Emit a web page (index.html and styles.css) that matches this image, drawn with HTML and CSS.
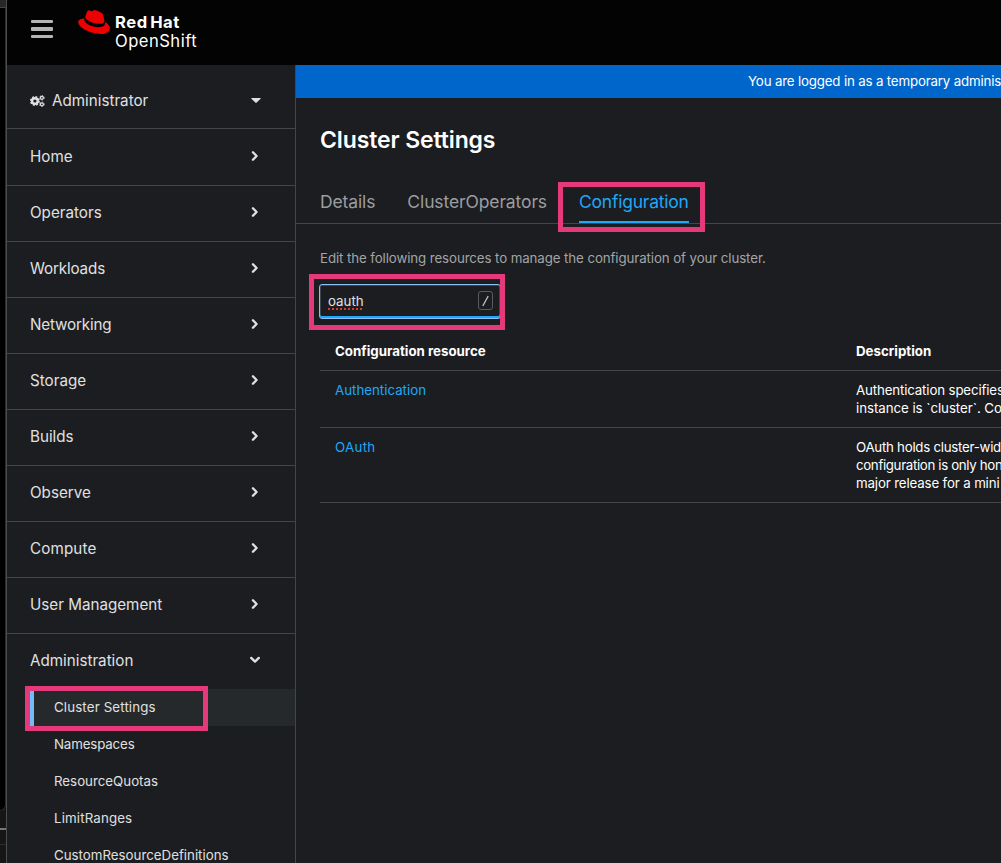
FILE: index.html
```html
<!DOCTYPE html>
<html lang="en">
<head>
<meta charset="utf-8">
<title>Cluster Settings · Red Hat OpenShift</title>
<link rel="stylesheet" href="styles.css">
</head>
<body>
<svg width="0" height="0" class="defs" aria-hidden="true">
  <symbol id="chev" viewBox="0 0 8 12"><path d="M1.9 2.2 5.6 6 1.9 9.8" fill="none" stroke="currentColor" stroke-width="2.3" stroke-linecap="round" stroke-linejoin="round"/></symbol>
</svg>
<div class="shell">
  <div class="edge"><div class="edge-top"></div><div class="edge-mid"></div><div class="edge-bar"></div><div class="edge-low"></div></div>
  <div class="app">
    <header class="masthead">
      <button class="burger" aria-label="Menu"><i></i><i></i><i></i></button>
      <a class="brand">
        <svg class="hat" viewBox="0 2.9 24 18.2"><path fill="#e00" d="M16.009 13.386c1.577 0 3.86-.326 3.86-2.202a1.765 1.765 0 0 0-.04-.431l-.94-4.08c-.216-.898-.406-1.305-1.982-2.093-1.223-.625-3.888-1.658-4.676-1.658-.733 0-.947.946-1.822.946-.842 0-1.467-.706-2.255-.706-.757 0-1.25.515-1.63 1.576 0 0-1.06 2.99-1.197 3.424a.81.81 0 0 0-.028.245c0 1.162 4.577 4.974 10.71 4.974m4.101-1.435c.218 1.032.218 1.14.218 1.277 0 1.765-1.984 2.745-4.593 2.745-5.895.004-11.06-3.451-11.06-5.734a2.326 2.326 0 0 1 .19-.925C2.746 9.415 0 9.794 0 12.217c0 3.969 9.405 8.861 16.851 8.861 5.71 0 7.149-2.582 7.149-4.62 0-1.605-1.387-3.425-3.887-4.512"/></svg>
        <span class="brand-text"><b>Red Hat</b><span>OpenShift</span></span>
      </a>
    </header>
    <div class="body">
      <nav class="sidebar">
        <div class="item perspective">
          <svg class="cogs" viewBox="0 0 15 12" fill="none" stroke="currentColor">
            <circle cx="4.9" cy="6" r="2.8" stroke-width="2.4"/>
            <circle cx="4.9" cy="6" r="4.2" stroke-width="1.5" stroke-dasharray="1.9 1.399"/>
            <circle cx="11.9" cy="2.8" r="1.5" stroke-width="1.3"/>
            <circle cx="11.9" cy="2.8" r="2.3" stroke-width=".8" stroke-dasharray="1.3 1.109"/>
            <circle cx="11.9" cy="9.3" r="1.5" stroke-width="1.3"/>
            <circle cx="11.9" cy="9.3" r="2.3" stroke-width=".8" stroke-dasharray="1.3 1.109"/>
          </svg>
          <span>Administrator</span>
          <svg class="caret" viewBox="0 0 10 5"><path d="M.6 0h8.8q.6.2.2.7L5.4 4.8q-.4.3-.8 0L.4.7Q0 .2.6 0z" fill="currentColor"/></svg>
        </div>
        <div class="item"><span>Home</span><svg class="chev"><use href="#chev"/></svg></div>
        <div class="item"><span>Operators</span><svg class="chev"><use href="#chev"/></svg></div>
        <div class="item"><span class="snug">Workloads</span><svg class="chev"><use href="#chev"/></svg></div>
        <div class="item"><span class="snug">Networking</span><svg class="chev"><use href="#chev"/></svg></div>
        <div class="item"><span>Storage</span><svg class="chev"><use href="#chev"/></svg></div>
        <div class="item"><span>Builds</span><svg class="chev"><use href="#chev"/></svg></div>
        <div class="item"><span>Observe</span><svg class="chev"><use href="#chev"/></svg></div>
        <div class="item"><span class="loose">Compute</span><svg class="chev"><use href="#chev"/></svg></div>
        <div class="item"><span>User Management</span><svg class="chev"><use href="#chev"/></svg></div>
        <div class="item open"><span>Administration</span><svg class="chev"><use href="#chev"/></svg></div>
        <div class="sub current"><span class="loose">Cluster Settings</span><div class="mark mark-nav"></div></div>
        <div class="sub"><span class="snug">Namespaces</span></div>
        <div class="sub"><span>ResourceQuotas</span></div>
        <div class="sub"><span class="loose">LimitRanges</span></div>
        <div class="sub"><span>CustomResourceDefinitions</span></div>
      </nav>
      <main class="main">
        <div class="banner">You are logged in as a temporary adminis</div>
        <h1>Cluster Settings</h1>
        <div class="tabs">
          <a class="tab">Details</a>
          <a class="tab">ClusterOperators</a>
          <a class="tab active">Configuration<span class="mark mark-tab"></span></a>
        </div>
        <p class="hint">Edit the following resources to manage the configuration of your cluster.</p>
        <div class="search"><span class="query">oauth</span><kbd><svg viewBox="0 0 7 12"><path d="M.8 11 6.2 1" stroke="currentColor" stroke-width="1.3"/></svg></kbd><div class="mark mark-search"></div></div>
        <div class="table">
          <div class="row head"><div>Configuration resource</div><div>Description</div></div>
          <div class="row"><div><a>Authentication</a></div><div class="desc">Authentication specifies<br><span class="even">instance is `cluster`. Co</span></div></div>
          <div class="row"><div><a class="oauth">OAuth</a></div><div class="desc"><span class="tight">OAuth holds cluster-wid</span><br><span class="tighter">configuration is only hon</span><br>major release for a mini</div></div>
        </div>
      </main>
    </div>
  </div>
</div>
</body>
</html>
```
FILE: styles.css
```css
* { box-sizing: border-box; }
body {
  margin: 0;
  height: 863px;
  overflow: hidden;
  background: #1b1d21;
  color: #fff;
  font: 13.3px/18px Inter, "Liberation Sans", sans-serif;
}
.defs { position: absolute; }
.shell { display: flex; height: 863px; }
.edge {
  display: flex;
  flex-direction: column;
  width: 7px;
  flex: none;
  background: #161616;
  border-right: 1px solid #4e4d4d;
}
.edge-top { height: 8px; background: #28282b; border-bottom: 1px solid #444; }
.edge-mid { height: 803px; background: #000; border-right: 1px solid #2b2b2b; border-bottom: 1px solid #2b2b2b; border-bottom-right-radius: 6px; }
.edge-bar { height: 2px; margin-top: 17px; background: #777; }
.edge-low { height: 15px; border-bottom: 1px solid #2c2c2c; }
.app { flex: 1; min-width: 0; display: flex; flex-direction: column; }
.masthead {
  display: flex;
  height: 65px;
  flex: none;
  padding-left: 24px;
  background: #030303;
}
.burger {
  display: flex;
  flex-direction: column;
  gap: 4px;
  width: 22px;
  margin: 19.5px 0 0;
  padding: 0;
  border: 0;
  background: none;
}
.burger i { height: 3.5px; border-radius: 1px; background: #b4b4b4; }
.brand { display: flex; padding: 10px 0 0 25px; }
.hat { width: 32px; height: 24px; }
.brand-text {
  display: flex;
  flex-direction: column;
  padding: 3px 0 0 5px;
  font-size: 16.6px;
  line-height: 19px;
  white-space: nowrap;
}
.brand-text b { letter-spacing: .55px; word-spacing: -2px; }
.brand-text span { letter-spacing: .48px; }
.body { display: flex; flex: 1; min-height: 0; }
.sidebar {
  width: 289px;
  flex: none;
  color: #e0e0e0;
  background: #1b1d21;
  border-right: 1px solid #444548;
}
.item {
  display: flex;
  align-items: center;
  height: 56px;
  padding: 0 36px 2px 23px;
  border-bottom: 1px solid #444548;
  font-size: 15.2px;
}
.item.perspective { height: 64px; padding: 8px 34px 0 23px; }
.item.perspective + .item { height: 57px; padding-bottom: 0; }
.item.open { height: 55px; border: 0; padding-bottom: 1px; }
.snug { letter-spacing: -.15px; }
.loose { letter-spacing: .14px; }
.cogs { width: 15px; height: 12px; margin-right: 7px; }
.caret { width: 10px; height: 5px; margin-left: auto; }
.chev { width: 8px; height: 12px; margin-left: auto; margin-bottom: 2px; }
.open .chev { transform: rotate(90deg); }
.sub {
  position: relative;
  display: flex;
  align-items: center;
  height: 37px;
  padding: 0 0 2px 47px;
}
.sub.current { background: linear-gradient(#26292c, #26292c) 23px 0 no-repeat; }
.sub.current::before {
  content: "";
  position: absolute;
  left: 23px;
  top: 0;
  width: 4px;
  height: 37px;
  background: #73bcf7;
}
.mark { position: absolute; border: 5px solid #e4397b; pointer-events: none; }
.mark-nav { left: 18px; top: -3px; width: 183px; height: 45px; }
.mark-tab { left: -21px; top: -1px; width: 147px; height: 50px; }
.mark-search { left: -11px; top: -11px; width: 196px; height: 56px; }
.main { flex: 1; min-width: 0; overflow: hidden; }
.banner {
  height: 33px;
  padding-left: 452px;
  background: #06c;
  line-height: 33px;
  letter-spacing: -.17px;
  white-space: nowrap;
}
h1 {
  margin: 27px 0 0 24px;
  font-size: 23px;
  line-height: 30px;
  font-weight: 600;
  letter-spacing: -.12px;
}
.tabs {
  display: flex;
  gap: 32px;
  height: 41px;
  margin-top: 28px;
  padding-left: 24px;
  border-bottom: 1px solid #444548;
  font-size: 17.5px;
  line-height: 38px;
  letter-spacing: -.12px;
  color: #9c9da0;
}
.tab { position: relative; height: 40px; }
.tab.active {
  width: 110px;
  color: #1fa7f8;
  border-bottom: 2px solid #1fa7f8;
  letter-spacing: -.22px;
}
.hint {
  margin: 25px 0 0 24px;
  color: #a3a4a6;
  letter-spacing: -.1px;
  white-space: nowrap;
}
.search {
  position: relative;
  display: flex;
  align-items: center;
  justify-content: space-between;
  width: 182px;
  height: 35px;
  margin: 17px 0 0 23px;
  padding: 0 7px 2px 8px;
  border: 1px solid #8bbcf5;
  border-radius: 3px;
  box-shadow: inset 0 -2px #1fa7f8, inset 0 0 0 1px #3c4550;
}
.query { color: #e0e0e0; text-decoration: underline dotted #d93a35 2px; text-underline-offset: 3px; text-decoration-skip-ink: none; }
kbd {
  display: flex;
  align-items: center;
  justify-content: center;
  width: 15px;
  height: 19px;
  border: 1px solid #5a5b5e;
  border-radius: 3px;
  color: #c4c4c4;
}
kbd svg { width: 7px; height: 12px; }
.table { margin: 9px 0 0 24px; }
.row {
  display: grid;
  grid-template-columns: 521px 1fr;
  padding: 10px 0 10px 15px;
  border-bottom: 1px solid #444548;
}
.row.head { height: 43px; padding-top: 14px; font-weight: 700; }
.row a { color: #1fa7f8; }
.row .oauth { letter-spacing: .3px; }
.desc { white-space: nowrap; letter-spacing: -.15px; }
.even { letter-spacing: -.06px; }
.tight { letter-spacing: -.27px; }
.tighter { letter-spacing: -.35px; }
```
